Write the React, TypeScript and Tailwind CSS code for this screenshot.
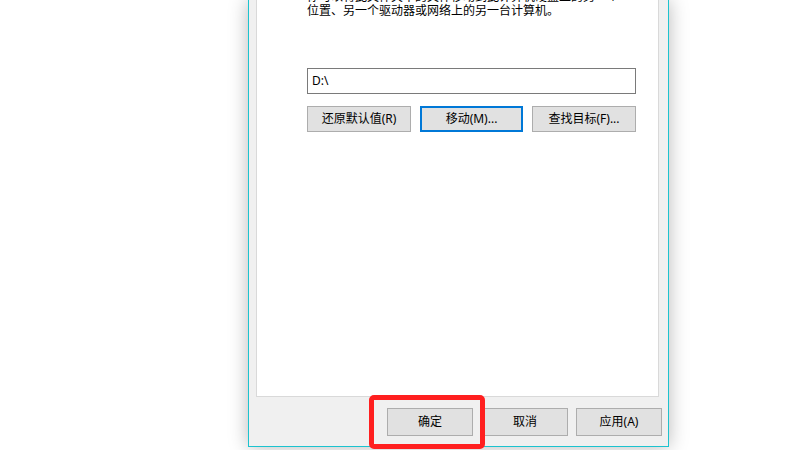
import React from "react";

const font = "font-['Noto_Sans','Noto_Sans_CJK_SC',sans-serif]";

const WinButton = ({
  label,
  focused,
  className,
}: {
  label: string;
  focused?: boolean;
  className: string;
}) => (
  <div
    className={`flex items-center justify-center bg-[#e1e1e1] text-[12px] text-black ${
      focused ? "border-2 border-[#0078d7]" : "border border-[#adadad]"
    } ${className}`}
  >
    {label}
  </div>
);

const App = () => {
  return (
    <div className={`relative w-[800px] h-[450px] overflow-hidden bg-white ${font}`}>
      <div className="ml-[248px] w-[421px] h-[447px] flex flex-col bg-[#f0f0f0] border-x border-b border-[#1cc3cf] shadow-[0_0_18px_rgba(0,0,0,0.28)]">
        {/* tab page */}
        <div className="ml-[7px] mr-[9px] h-[397px] bg-white border-x border-b border-[#d9d9d9] pl-[50px] pr-[22px]">
          <div className="-mt-[10px] text-[12px] leading-[14px] text-black whitespace-nowrap">
            <p>你可以将此文件夹中的文件移动到此计算机硬盘上的另一个</p>
            <p>位置、另一个驱动器或网络上的另一台计算机。</p>
          </div>

          <div className="mt-[50px] h-[26px] flex items-center border border-[#7a7a7a] bg-white pl-[4px] text-[12px] text-black">
            D:\
          </div>

          <div className="mt-[12px] flex justify-between">
            <WinButton label="还原默认值(R)" className="w-[104px] h-[26px]" />
            <WinButton label="移动(M)..." focused className="w-[103px] h-[26px]" />
            <WinButton label="查找目标(F)..." className="w-[104px] h-[26px]" />
          </div>
        </div>

        {/* footer buttons */}
        <div className="mt-[11px] flex justify-end gap-2 pr-[6px]">
          <WinButton label="确定" className="w-[86px] h-[28px] mr-[1px]" />
          <WinButton label="取消" className="w-[86px] h-[28px]" />
          <WinButton label="应用(A)" className="w-[86px] h-[28px]" />
        </div>
      </div>

      {/* red highlight around OK */}
      <div className="absolute left-[369px] top-[395px] w-[116px] h-[54px] border-[5px] border-[#ff1f1f] rounded-[5px]" />
    </div>
  );
};

export default App;
